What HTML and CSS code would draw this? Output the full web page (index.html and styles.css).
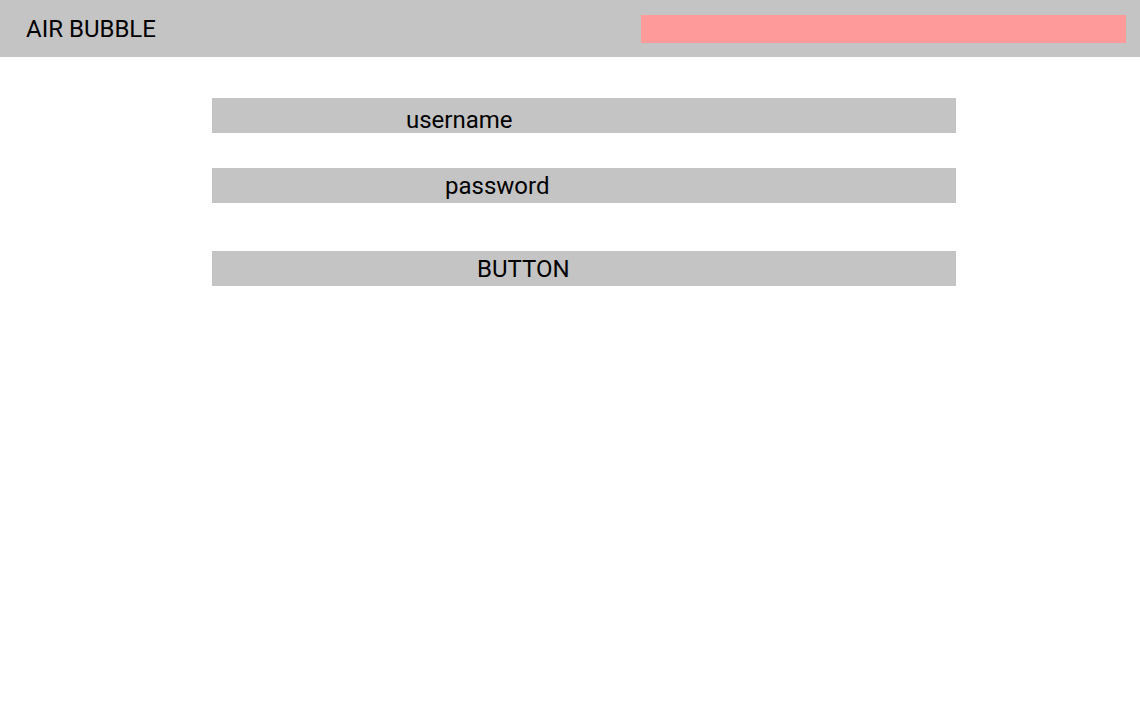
FILE: index.html
```html
<!DOCTYPE html>
<html>
    <head>
        <title>Air Bubble</title>
        <link rel="stylesheet" href="styles.css">
    </head>
    <body>
        <div class="header">
            <div class="logo">AIR BUBBLE</div>
            <div class="searchBar"></div>
        </div>
        <div class="loginForm">
            <div class="field usernameField">username</div>
            <div class="field passwordField">password</div>
            <button class="loginButton">BUTTON</button>
        </div>
    </body>
</html>
```

FILE: styles.css
```css
/* Basic page layout */
body {
    margin: 0;
    background-color: rgb(255, 255, 255);
    font-family: 'Roboto', sans-serif;
    color: rgb(0, 0, 0);
}

.header {
    display: flex;
    justify-content: space-between;
    align-items: center;
    height: 57px;
    background-color: rgb(196, 196, 196);
}

.logo {
    font-size: 24px;
    padding-left: 26px;
}

.searchBar {
    width: 485px;
    height: 28px;
    margin-right: 14px;
    background-color: rgb(255, 154, 154);
}

.loginForm {
    display: flex;
    flex-direction: column;
    width: 744px;
    margin-left: 212px;
    padding-top: 41px;
}

.field,
.loginButton {
    box-sizing: border-box;
    height: 35px;
    background-color: rgb(196, 196, 196);
    font-family: 'Roboto', sans-serif;
    font-size: 24px;
    line-height: 26px;
    text-align: left;
    border: none;
    margin: 0;
    color: rgb(0, 0, 0);
}

.usernameField {
    padding: 9px 0 0 194px;
}

.passwordField {
    margin-top: 35px;
    padding: 5px 0 0 233px;
}

/* buttons centre their content, so balance top and bottom padding */
.loginButton {
    margin-top: 48px;
    padding: 5px 0 4px 265px;
}
```
